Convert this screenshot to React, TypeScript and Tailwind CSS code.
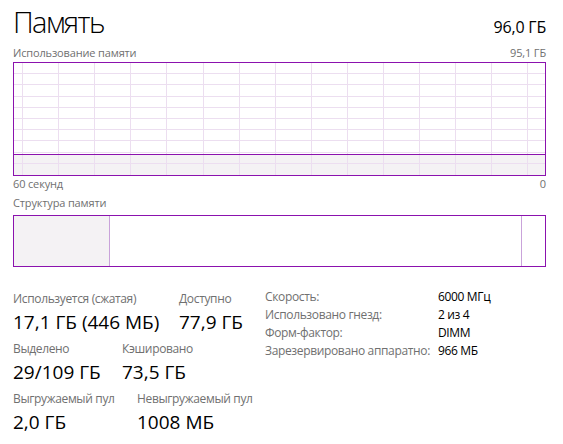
import type { FC, ReactNode } from 'react';

const PURPLE = '#8b12ae';

const UsageGraph: FC = () => {
  const w = 531;
  const h = 112;
  const vLines = Array.from({ length: 15 }, (_, i) => 8.5 + Math.round(i * 36.1));
  const hLines = Array.from({ length: 9 }, (_, i) => Math.round((i + 1) * 11.2) - 0.5);
  const usedY = 91.5;
  return (
    <div className="h-[114px] w-[533px] border border-[#8b12ae]">
      <svg width={w} height={h} viewBox={`0 0 ${w} ${h}`} className="block">
        <rect x={0} y={usedY} width={w} height={h - usedY} fill="#f4f2f4" />
        {vLines.map(x => (
          <line key={`v${x}`} x1={x} y1={0} x2={x} y2={h} stroke="#ecdef0" strokeWidth={1} />
        ))}
        {hLines.map(y => (
          <line key={`h${y}`} x1={0} y1={y} x2={w} y2={y} stroke="#ecdef0" strokeWidth={1} />
        ))}
        <line x1={0} y1={usedY} x2={w} y2={usedY} stroke={PURPLE} strokeWidth={1} />
      </svg>
    </div>
  );
};

const Composition: FC = () => (
  <div className="flex h-[52px] w-[533px] border border-[#8b12ae]">
    <div className="w-[96px] shrink-0 border-r border-[#c9a3da] bg-[#f4f2f4]" />
    <div className="w-[412px] shrink-0 border-r border-[#c9a3da]" />
    <div className="grow" />
  </div>
);

const Stat: FC<{ label: string; value: string; className?: string }> = ({ label, value, className }) => (
  <div className={className}>
    <p className="h-[16px] text-[12px] leading-[16px] tracking-[-0.35px] whitespace-nowrap text-[#707070]">{label}</p>
    <p className="mt-[3px] h-[24px] text-[19px] leading-[24px] whitespace-nowrap text-black">{value}</p>
  </div>
);

const Info: FC<{ label: string; children: ReactNode }> = ({ label, children }) => (
  <div className="flex h-[18px] items-center text-[12px] leading-[18px] tracking-[-0.35px] whitespace-nowrap">
    <span className="w-[173px] shrink-0 text-[#707070]">{label}</span>
    <span className="text-black">{children}</span>
  </div>
);

export default function App() {
  return (
    <div
      className="h-[444px] w-[563px] overflow-hidden bg-white pl-[13px] pr-[17px] pt-[7px]"
      style={{ fontFamily: '"Segoe UI", "Open Sans", "Noto Sans", sans-serif' }}
    >
      <div className="flex h-[30px] items-baseline justify-between">
        <h1 className="text-[29px] leading-[30px] font-light tracking-[-1.6px] text-black">Память</h1>
        <span className="text-[16px] leading-[30px] tracking-[-0.2px] text-black">96,0 ГБ</span>
      </div>

      <div className="mt-[9px] flex h-[14px] justify-between text-[11px] leading-[14px] tracking-[-0.15px] text-[#707070]">
        <span>Использование памяти</span>
        <span>95,1 ГБ</span>
      </div>
      <div className="mt-[2px]">
        <UsageGraph />
      </div>
      <div className="mt-[1px] flex h-[14px] justify-between text-[11px] leading-[14px] tracking-[-0.15px] text-[#707070]">
        <span>60 секунд</span>
        <span>0</span>
      </div>
      <p className="mt-[5px] h-[14px] text-[11px] leading-[14px] tracking-[-0.15px] text-[#707070]">Структура памяти</p>
      <div className="mt-[5px]">
        <Composition />
      </div>

      <div className="mt-[21px] flex">
        <div className="flex w-[252px] shrink-0 flex-col gap-[7px] pt-[3px]">
          <div className="flex">
            <Stat className="w-[166px] shrink-0" label="Используется (сжатая)" value="17,1 ГБ (446 МБ)" />
            <Stat label="Доступно" value="77,9 ГБ" />
          </div>
          <div className="flex">
            <Stat className="w-[109px] shrink-0" label="Выделено" value="29/109 ГБ" />
            <Stat label="Кэшировано" value="73,5 ГБ" />
          </div>
          <div className="flex">
            <Stat className="w-[124px] shrink-0" label="Выгружаемый пул" value="2,0 ГБ" />
            <Stat label="Невыгружаемый пул" value="1008 МБ" />
          </div>
        </div>
        <div className="flex flex-col">
          <Info label="Скорость:">6000 МГц</Info>
          <Info label="Использовано гнезд:">2 из 4</Info>
          <Info label="Форм-фактор:">DIMM</Info>
          <Info label="Зарезервировано аппаратно:">966 МБ</Info>
        </div>
      </div>
    </div>
  );
}
